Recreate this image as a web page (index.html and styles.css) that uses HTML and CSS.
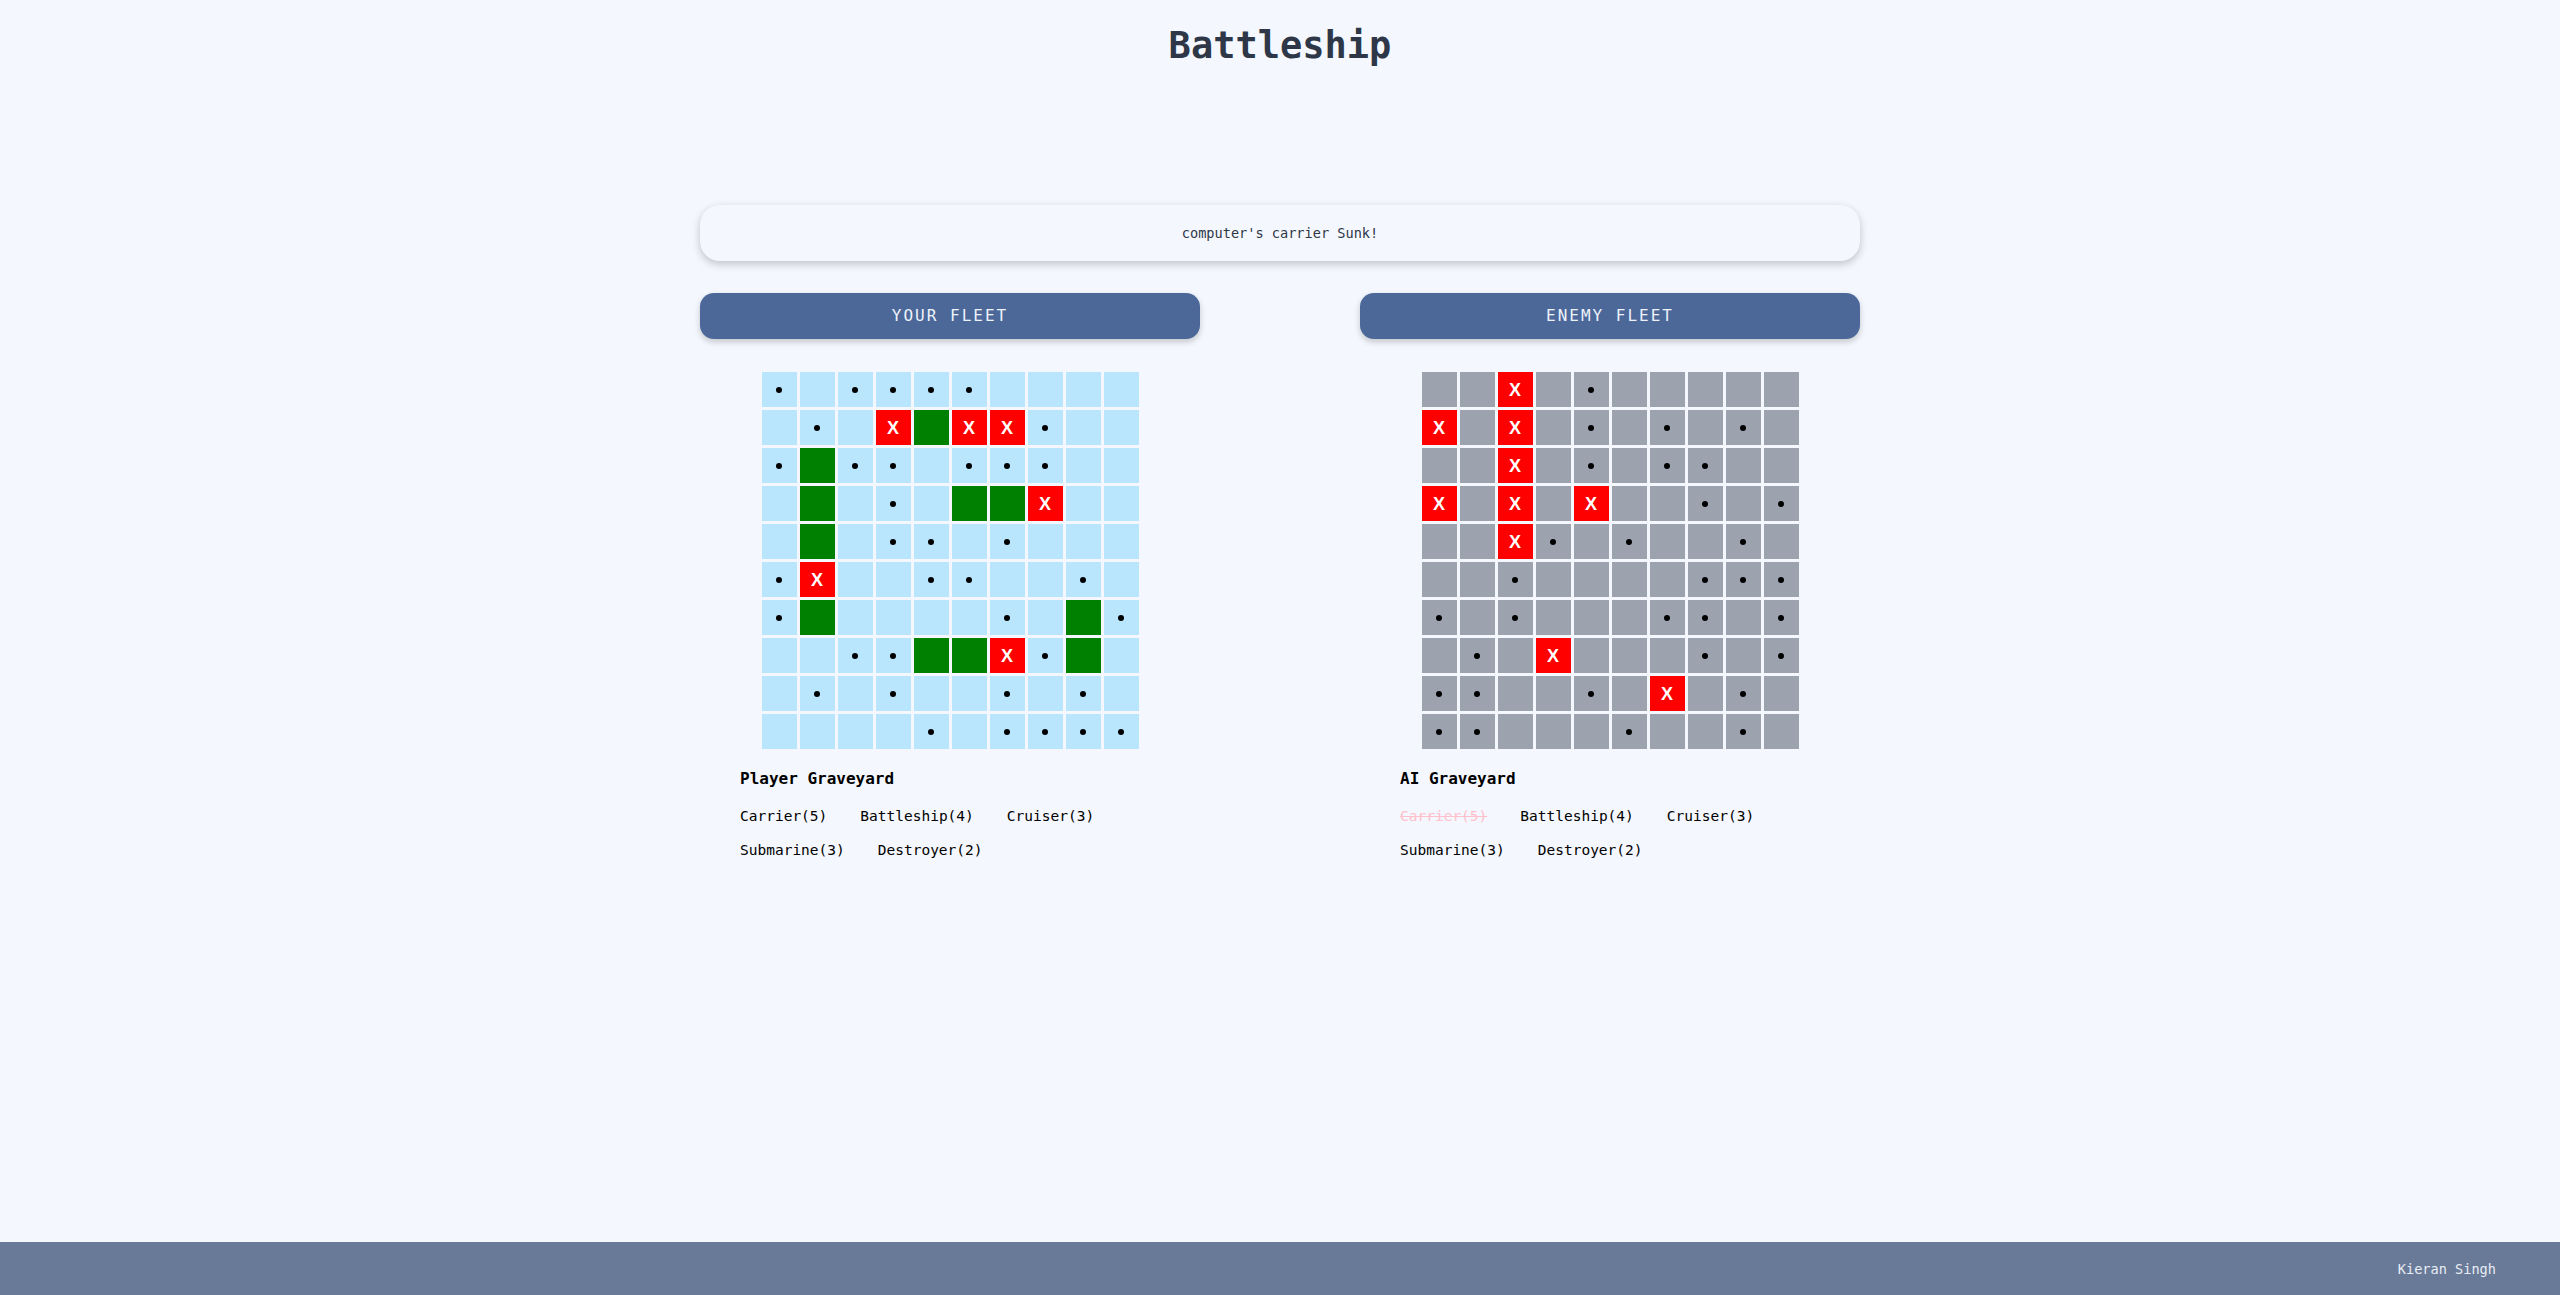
FILE: index.html
```html
<!DOCTYPE html>
<html lang="en">
<head>
<meta charset="utf-8">
<title>Battleship</title>
<link rel="stylesheet" href="styles.css">
</head>
<body>
<main class="page">
  <h1 class="title">Battleship</h1>
  <div class="status">computer's carrier Sunk!</div>
  <div class="fleets">
    <section class="fleet">
      <div class="fleet-header">YOUR FLEET</div>
      <div class="board" id="player-board"></div>
      <div class="graveyard">
        <div class="graveyard-title">Player Graveyard</div>
        <div class="ships">
          <span class="ship">Carrier(5)</span>
          <span class="ship">Battleship(4)</span>
          <span class="ship">Cruiser(3)</span>
          <span class="ship">Submarine(3)</span>
          <span class="ship">Destroyer(2)</span>
        </div>
      </div>
    </section>
    <section class="fleet">
      <div class="fleet-header">ENEMY FLEET</div>
      <div class="board enemy" id="enemy-board"></div>
      <div class="graveyard">
        <div class="graveyard-title">AI Graveyard</div>
        <div class="ships">
          <span class="ship sunk">Carrier(5)</span>
          <span class="ship">Battleship(4)</span>
          <span class="ship">Cruiser(3)</span>
          <span class="ship">Submarine(3)</span>
          <span class="ship">Destroyer(2)</span>
        </div>
      </div>
    </section>
  </div>
</main>
<footer class="footer">Kieran Singh</footer>
<script src="script.js"></script>
</body>
</html>
```
FILE: styles.css
```css
* { box-sizing: border-box; }
html, body { margin: 0; padding: 0; }
body {
  background: #f4f7fd;
  font-family: "DejaVu Sans Mono", "Liberation Mono", monospace;
  color: #1a202c;
  min-height: 100vh;
  display: flex;
  flex-direction: column;
}
.page {
  flex: 1;
  display: flex;
  flex-direction: column;
  align-items: center;
}
.title {
  margin: 0;
  padding-top: 24px;
  line-height: 44px;
  font-size: 37px;
  font-weight: bold;
  color: #2d3748;
}
.status {
  margin-top: 137px;
  width: 1160px;
  height: 56px;
  line-height: 56px;
  text-align: center;
  font-size: 13.6px;
  color: #2d3748;
  background: #f4f7fd;
  border-radius: 20px;
  box-shadow: 0 3px 8px rgba(0, 0, 0, 0.22);
}
.fleets {
  margin-top: 32px;
  width: 1160px;
  display: grid;
  grid-template-columns: 500px 500px;
  column-gap: 160px;
}
.fleet {
  display: flex;
  flex-direction: column;
  align-items: center;
}
.fleet-header {
  width: 100%;
  height: 46px;
  line-height: 46px;
  text-align: center;
  background: #4b6899;
  color: #eef2fa;
  font-size: 16px;
  letter-spacing: 2px;
  border-radius: 14px;
  box-shadow: 0 3px 6px rgba(0, 0, 0, 0.2);
}
.board {
  margin-top: 33px;
  display: grid;
  grid-template-columns: repeat(10, 35px);
  grid-auto-rows: 35px;
  gap: 3px;
}
.cell {
  background: #bae6fd;
  display: flex;
  align-items: center;
  justify-content: center;
}
.enemy .cell { background: #9ca3af; }
.cell.ship { background: #008000; }
.cell.hit { background: #ff0000; }
.cell.hit::after {
  content: "X";
  color: #ffffff;
  font-family: "Liberation Sans", Arial, sans-serif;
  font-size: 18px;
  font-weight: bold;
  line-height: 1;
}
.cell.miss::after {
  content: "";
  width: 6px;
  height: 6px;
  border-radius: 50%;
  background: #000;
}
.graveyard {
  width: 100%;
  padding: 0 40px;
  margin-top: 20px;
}
.graveyard-title {
  font-weight: bold;
  font-size: 16px;
  line-height: 20px;
  color: #000;
}
.ships {
  margin-top: 17px;
  display: flex;
  flex-wrap: wrap;
  column-gap: 33px;
  row-gap: 14px;
}
.ship {
  font-size: 14.5px;
  line-height: 20px;
  color: #000;
}
.ship.sunk {
  color: #ffc0cb;
  text-decoration: line-through;
}
.footer {
  height: 53px;
  background: #687a98;
  color: #e8edf5;
  font-size: 13.6px;
  display: flex;
  align-items: center;
  justify-content: flex-end;
  padding-right: 64px;
}
```
FILE: script.js
```js
const playerBoard = [
  ".o....oooo",
  "o.oXSXX.oo",
  ".S..o...oo",
  "oSo.oSSXoo",
  "oSo..o.ooo",
  ".Xoo..oo.o",
  ".Soooo.oS.",
  "oo..SSX.So",
  "o.o.oo.o.o",
  "oooo.o....",
];
const enemyBoard = [
  "ooXo.ooooo",
  "XoXo.o.o.o",
  "ooXo.o..oo",
  "XoXoXoo.o.",
  "ooX.o.oo.o",
  "oo.oooo...",
  ".o.ooo..o.",
  "o.oXooo.o.",
  "..oo.oXo.o",
  "..ooo.oo.o",
];
function build(id, rows) {
  const board = document.getElementById(id);
  rows.forEach(row => {
    for (const ch of row) {
      const c = document.createElement("div");
      c.className = "cell";
      if (ch === ".") c.classList.add("miss");
      if (ch === "X") c.classList.add("hit");
      if (ch === "S") c.classList.add("ship");
      board.appendChild(c);
    }
  });
}
build("player-board", playerBoard);
build("enemy-board", enemyBoard);
```
